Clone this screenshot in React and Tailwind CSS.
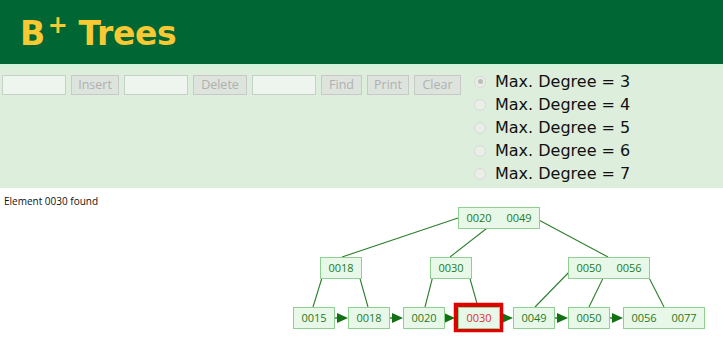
import React from 'react';

const leafY = 307;
const midY = 257;
const rootY = 207;

// tree layout, page coordinates
const nodes = [
  { x: 458, y: rootY, keys: ['0020', '0049'] },
  { x: 320, y: midY, keys: ['0018'] },
  { x: 430, y: midY, keys: ['0030'] },
  { x: 568, y: midY, keys: ['0050', '0056'] },
  { x: 293, y: leafY, keys: ['0015'] },
  { x: 348, y: leafY, keys: ['0018'] },
  { x: 403, y: leafY, keys: ['0020'] },
  { x: 458, y: leafY, keys: ['0030'], found: true },
  { x: 513, y: leafY, keys: ['0049'] },
  { x: 568, y: leafY, keys: ['0050'] },
  { x: 623, y: leafY, keys: ['0056', '0077'] },
];

const edges = [
  [458, 218, 342, 257],
  [500, 218, 450, 257],
  [535, 218, 608, 257],
  [325, 268, 313, 307],
  [357, 268, 368, 307],
  [435, 268, 425, 307],
  [467, 268, 478, 307],
  [573, 268, 535, 307],
  [608, 268, 589, 307],
  [644, 268, 664, 307],
];

const leaves = nodes.filter((n) => n.y === leafY);

function TreeNode({ node }) {
  const w = node.keys.length === 1 ? 41 : 81;
  return (
    <g>
      {node.found && (
        <rect x={node.x - 2} y={node.y - 2} width={w + 4} height={25} fill="none" stroke="#e00000" strokeWidth={4.5} />
      )}
      <rect x={node.x + 0.5} y={node.y + 0.5} width={w} height={21} fill="#e8f8e8" stroke="#8fcf8f" strokeWidth={1} />
      {node.keys.map((k, i) => (
        <text
          key={k + i}
          x={node.x + (node.keys.length === 1 ? 21 : 21 + i * 40)}
          y={node.y + 15}
          textAnchor="middle"
          fontSize="11"
          fontFamily="'Open Sans', sans-serif"
          fill={node.found ? '#e03030' : '#1f7a1f'}
        >
          {k}
        </text>
      ))}
    </g>
  );
}

function Tree() {
  return (
    <svg className="absolute left-0 top-0" width="723" height="162" viewBox="0 188 723 162">
      {edges.map(([x1, y1, x2, y2], i) => (
        <line key={i} x1={x1} y1={y1} x2={x2} y2={y2} stroke="#2e7d2e" strokeWidth={1.1} />
      ))}
      {leaves.slice(0, -1).map((n, i) => {
        const w = n.keys.length === 1 ? 41 : 81;
        const next = leaves[i + 1];
        const tip = next.found ? next.x - 3 : next.x;
        const y = leafY + 11;
        return (
          <g key={i}>
            <line x1={n.x + w - 5} y1={y} x2={tip - 8} y2={y} stroke="#1e7a1e" strokeWidth={1.4} />
            <polygon points={`${tip - 11},${y - 5} ${tip},${y} ${tip - 11},${y + 5}`} fill="#137013" />
          </g>
        );
      })}
      {nodes.map((n, i) => (
        <TreeNode key={i} node={n} />
      ))}
    </svg>
  );
}

const Field = () => (
  <input className="h-5 w-16 border border-[#c8cfc8] bg-[#eef5ee] outline-none" disabled />
);

const Btn = ({ label, w }) => (
  <button
    className={`h-5 ${w} border border-[#c8c8c8] bg-[#dde3dd] text-[12.5px] leading-none text-[#b0b0b0] font-['Open_Sans',sans-serif]`}
    disabled
  >
    {label}
  </button>
);

export default function App() {
  const degrees = [3, 4, 5, 6, 7];
  return (
    <div className="w-[723px] h-[350px] overflow-hidden bg-white">
      {/* Header */}
      <header className="h-16 bg-[#006633] flex items-center pl-5 pt-[3px]">
        <h1 className="text-[33px] font-bold text-[#f9c934] font-['DejaVu_Sans',sans-serif] tracking-[-0.4px] leading-none">
          B<sup className="text-[24px] font-semibold relative -top-[12px] align-baseline ml-[3px]">+</sup> Trees
        </h1>
      </header>
      <div className="h-1 bg-[#d2f1d9]" />

      {/* Controls */}
      <div className="h-[120px] bg-[#ddeedd] flex items-start">
        <div className="flex gap-[5px] pl-[2px] pt-[7px]">
          <Field />
          <Btn label="Insert" w="w-12" />
          <Field />
          <Btn label="Delete" w="w-[54px]" />
          <Field />
          <Btn label="Find" w="w-[41px]" />
          <Btn label="Print" w="w-[42px]" />
          <Btn label="Clear" w="w-[47px]" />
        </div>
        <div className="ml-[13px] pt-[2px] flex flex-col">
          {degrees.map((d) => (
            <label key={d} className="h-[23px] flex items-center text-[16px] text-[#111] font-['DejaVu_Sans',sans-serif]">
              <span className="w-3 h-3 rounded-full border border-[#d4dcd4] bg-[#e9eee9] flex items-center justify-center mr-[9px]">
                {d === 3 && <span className="w-[5px] h-[5px] rounded-full bg-[#b9beb9]" />}
              </span>
              Max. Degree = {d}
            </label>
          ))}
        </div>
      </div>

      {/* Canvas */}
      <div className="relative h-[162px]">
        <p className="pl-1 pt-[8px] text-[10px] leading-none text-[#111] font-['Open_Sans',sans-serif]">
          Element 0030 found
        </p>
        <Tree />
      </div>
    </div>
  );
}
